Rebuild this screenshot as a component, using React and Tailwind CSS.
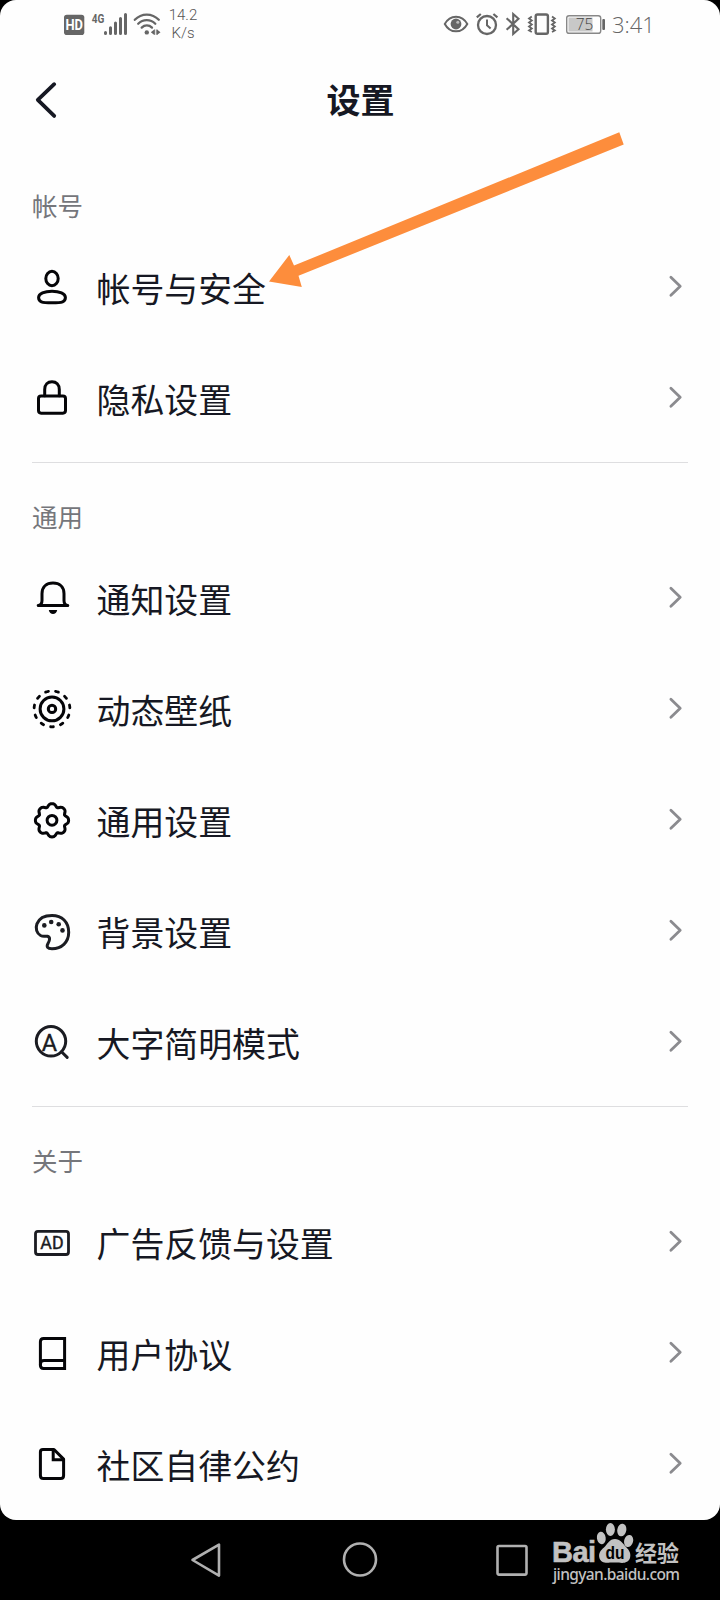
import React from "react";

const FONT = "font-['Roboto','Noto_Sans_CJK_SC',sans-serif]";

const gearPath =
  Array.from({ length: 96 }, (_, i) => {
    const a = (i / 96) * Math.PI * 2;
    const r = 15.4 + 1.5 * Math.cos(8 * a) - 0.3 * Math.cos(16 * a);
    return `${i ? "L" : "M"}${(r * Math.cos(a)).toFixed(2)} ${(1 + r * Math.sin(a)).toFixed(2)}`;
  }).join("") + "Z";

function Icon({ children, color = "#050508" }) {
  return (
    <svg
      className="h-12 w-12 shrink-0"
      viewBox="-24 -23.3 48 48"
      fill="none"
      stroke={color}
      strokeWidth="3"
      strokeLinecap="round"
      strokeLinejoin="round"
    >
      {children}
    </svg>
  );
}

const icons = {
  user: (
    <Icon>
      <ellipse cx="0" cy="-7.8" rx="6.2" ry="7.2" />
      <path d="M-13.4 11.2C-13.4 7.3-7.5 4.9 0 4.9S13.4 7.3 13.4 11.2C13.4 15.6 10.4 16.5 0 16.5S-13.4 15.6-13.4 11.2Z" />
    </Icon>
  ),
  lock: (
    <Icon>
      <rect x="-13.5" y="-1.3" width="27" height="17.2" rx="2.6" />
      <path d="M-7.3-1.6V-7.7C-7.3-12.7-4.3-15.5 0-15.5S7.3-12.7 7.3-7.7V-1.6" />
    </Icon>
  ),
  bell: (
    <Icon>
      <path d="M-13.8 8.2H15.8C13 7.8 12 6.1 12 3.1V-3.6C12-10.4 7.5-14.4 1-14.4S-10-10.4-10-3.6V3.1C-10 6.1-11 7.8-13.8 8.2Z" />
      <path d="M-3.2 12.8H5.2C4.8 15.6 3 16.8 1 16.8S-2.8 15.6-3.2 12.8Z" fill="#050508" stroke="none" />
    </Icon>
  ),
  live: (
    <Icon>
      <circle cx="0" cy="0.6" r="11.9" />
      <circle cx="0" cy="0.6" r="3.7" />
      <circle
        cx="0"
        cy="0.6"
        r="17.9"
        strokeWidth="2.8"
        pathLength="110"
        strokeDasharray="2.8 7.2"
        strokeDashoffset="1.4"
        transform="rotate(90 0 0.6)"
      />
    </Icon>
  ),
  gear: (
    <Icon>
      <path d={gearPath} />
      <circle cx="0" cy="1" r="4.9" />
    </Icon>
  ),
  palette: (
    <Icon color="#1b1c22">
      <path d="M0-14.9C10-14.9 16.7-8.2 16.7 2S9.5 18.4 0 18.4C-4.6 18.4-5.8 16.4-4 13.2C-2 9.6-1.6 6.8-4.6 6C-6.8 5.4-8.6 6.6-11.4 5.2C-19.2 1-17.2-14.9 0-14.9Z" />
      <g fill="#1b1c22" stroke="none">
        <circle cx="-7.7" cy="-4.9" r="2.3" />
        <circle cx="-.8" cy="-8.3" r="2.3" />
        <circle cx="6.7" cy="-6.1" r="2.3" />
        <circle cx="10.5" cy="0.1" r="2.3" />
      </g>
    </Icon>
  ),
  zoomA: (
    <Icon color="#1b1c22">
      <circle cx="-1" cy="0" r="14.7" />
      <path d="M9.5 10.5L15.2 16.1" />
      <text x="-2.6" y="10" fontSize="23.5" textAnchor="middle" fill="#1b1c22" stroke="#1b1c22" strokeWidth="0.4" fontFamily="Roboto">A</text>
    </Icon>
  ),
  ad: (
    <Icon color="#1b1c22">
      <rect x="-16.5" y="-10" width="33" height="23.2" rx="2.5" strokeWidth="2.8" />
      <text x="0" y="7.9" fontSize="17.8" textAnchor="middle" fill="#1b1c22" stroke="#1b1c22" strokeWidth="0.4" fontFamily="Roboto" textLength="23.5">AD</text>
    </Icon>
  ),
  book: (
    <Icon>
      <path d="M-8.4-13.8H12.6V16.2H-8.4C-10.4 16.2-11.6 15-11.6 13V-10.6C-11.6-12.6-10.4-13.8-8.4-13.8Z" strokeLinejoin="miter" />
      <path d="M-11.6 12C-11.6 9.2-10.5 8.2-8 8.2H12.6" />
    </Icon>
  ),
  file: (
    <Icon>
      <path d="M-9-13.8H2L11.6-4.2V12.2C11.6 14.2 10.6 15.2 8.6 15.2H-8.6C-10.6 15.2-11.6 14.2-11.6 12.2V-11.2C-11.6-13-10.6-13.8-9-13.8Z" />
      <path d="M1.2-13.4V-3.6H11.2" strokeLinejoin="miter" />
    </Icon>
  ),
};

function Row({ icon, label }) {
  return (
    <div className="flex h-[111px] items-center pr-9 pl-7">
      {icons[icon]}
      <span className="ml-[20.5px] flex-1 pt-[9px] text-[33.9px] leading-none text-[#161823]">{label}</span>
      <svg className="h-6 w-4" viewBox="0 0 16 24" fill="none" stroke="#8b8b8f" strokeWidth="2.8" strokeLinecap="round" strokeLinejoin="round">
        <path d="M2.9 2.3L12.2 11.3L2.9 20.3" />
      </svg>
    </div>
  );
}

function Section({ title, rows }) {
  return (
    <section className="flex flex-col">
      <h2 className="flex h-[79px] items-start px-8 pt-[43px] text-[25.5px] leading-[25px] text-[#75767b]">{title}</h2>
      {rows.map(([icon, label]) => (
        <Row key={label} icon={icon} label={label} />
      ))}
    </section>
  );
}

function StatusBar() {
  return (
    <div className="flex h-12 items-start pt-2 pl-[60px] text-[#666]">
      <svg className="h-8 w-[104px]" viewBox="60 8 104 32" fill="#666">
        <rect x="64" y="14.7" width="20.3" height="20.3" rx="2.8" />
        <text x="74.2" y="30" fontSize="14" fontWeight="700" fontFamily="Roboto" textAnchor="middle" textLength="17.5" lengthAdjust="spacingAndGlyphs" fill="#fff">HD</text>
        <text x="91.8" y="22.8" fontSize="13.2" fontWeight="700" fontFamily="Roboto" textLength="12.6" lengthAdjust="spacingAndGlyphs">4G</text>
        <g stroke="#666" strokeWidth="3" strokeLinecap="round">
          <path d="M105.5 32.5V33.5M110.5 27.8V33.5M115.5 23V33.5M120.5 18.5V33.5M125.5 14.5V33.5" />
        </g>
        <g fill="none" stroke="#666" strokeWidth="2.3" strokeLinecap="round">
          <path d="M134.8 19.8C141.5 12.8 152 12.8 158.8 19.8" />
          <path d="M138.2 23.7C143 19 150.5 19 155.3 23.7" />
          <path d="M141.7 27.6C144.7 24.7 149 24.7 152 27.6" />
        </g>
        <circle cx="146.8" cy="32.4" r="2.2" />
        <path d="M150.8 32.3L154.3 29.6V35ZM160.5 32.3L157 29.6V35Z" />
        <path d="M154.7 29.5V34.8M156.8 29.5V34.8" stroke="#666" strokeWidth="1" />
      </svg>
      <div className="-mt-px -ml-px mr-px flex w-10 flex-col items-center text-[15px] leading-[17.5px] font-light text-[#555]">
        <span>14.2</span>
        <span>K/s</span>
      </div>
      <svg className="ml-[236px] h-8 w-[168px]" viewBox="440 8 168 32" fill="none" stroke="#666" strokeWidth="2">
        <path d="M444.8 24C450 14.2 462 14.2 467.3 24C462 33.8 450 33.8 444.8 24Z" />
        <circle cx="456" cy="24" r="5.4" fill="#666" stroke="none" />
        <circle cx="457.8" cy="22.2" r="1.5" fill="#bbb" stroke="none" />
        <circle cx="487" cy="25" r="9" strokeWidth="2.3" />
        <path d="M476.8 17.4L480.8 14M497.4 17.4L493.4 14" strokeWidth="2.2" />
        <path d="M487 19.5V25.3L490.6 28.5" />
        <path d="M506.6 18.2L518.5 29.3L513.2 34V14L518.5 18.7L506.6 29.8" strokeWidth="2.1" />
        <rect x="535.7" y="14.5" width="12.2" height="19.3" rx="1.8" strokeWidth="2.4" />
        <path d="M531.8 16.5L529 18.5L531.8 20.5L529 22.5L531.8 24.5L529 26.5L531.8 28.5L529 30.5L531.8 32M552 16.5L554.8 18.5L552 20.5L554.8 22.5L552 24.5L554.8 26.5L552 28.5L554.8 30.5L552 32" strokeWidth="1.8" />
        <rect x="566.7" y="15.7" width="34" height="17.6" rx="2.4" strokeWidth="1.4" stroke="#888" />
        <rect x="568.5" y="17.5" width="24" height="14" fill="#c8c8c8" stroke="none" />
        <rect x="602.3" y="19" width="2.7" height="11" rx="1" fill="#666" stroke="none" />
        <text x="584.5" y="30" fontSize="15.5" fontWeight="300" textAnchor="middle" fontFamily="Open Sans" fill="#444" stroke="none">75</text>
      </svg>
      <span className="ml-1 font-['Open_Sans'] text-[22px] leading-[33px] font-light text-[#666]">3:41</span>
    </div>
  );
}

function NavBar() {
  return (
    <div className="relative flex h-20 items-center pt-0 pl-[188px]">
      <svg className="h-10 w-9" viewBox="0 0 36 40" fill="none" stroke="#b0b0b0" strokeWidth="2.6" strokeLinejoin="round">
        <path d="M4.5 20L31 4.7V35.6Z" />
      </svg>
      <svg className="ml-[116px] h-10 w-10" viewBox="0 0 40 40" fill="none" stroke="#b0b0b0" strokeWidth="2.6">
        <circle cx="20" cy="19.5" r="16" />
      </svg>
      <svg className="ml-28 h-10 w-10" viewBox="0 0 40 40" fill="none" stroke="#b0b0b0" strokeWidth="2.6">
        <rect x="5.5" y="6" width="29" height="28.6" rx="1.5" />
      </svg>
      <svg className="ml-4 h-[72px] w-[136px] self-start" viewBox="548 1520 136 72" fill="#c2c2c2">
        <text x="552" y="1562" fontSize="29" fontWeight="700" fontFamily="Liberation Sans" textLength="44" stroke="#c2c2c2" strokeWidth="0.6">Bai</text>
        <ellipse cx="601.3" cy="1538" rx="4.4" ry="6.2" transform="rotate(-8 601.3 1538)" />
        <ellipse cx="610.4" cy="1529.5" rx="4.5" ry="6.5" />
        <ellipse cx="621.8" cy="1530" rx="4.5" ry="6.4" transform="rotate(10 621.8 1530)" />
        <ellipse cx="628.6" cy="1541" rx="4.5" ry="6.2" transform="rotate(14 628.6 1541)" />
        <path d="M615 1539C620 1539 622.5 1543 626 1547C630 1551 631 1554 630 1558C628.5 1563 623 1563.3 619 1562.6H610C606 1563.3 600.5 1563 599.3 1557.5C598.5 1553 600.5 1550.5 604 1547.5C607.5 1544 609.5 1539 615 1539Z" />
        <text x="615" y="1559" fontSize="18" fontWeight="700" textAnchor="middle" fontFamily="Liberation Sans" textLength="19" lengthAdjust="spacingAndGlyphs" fill="#000">du</text>
        <text x="635" y="1560.5" fontSize="22" fontWeight="700" fontFamily="Noto Sans CJK SC">经验</text>
        <text x="553" y="1579.5" fontSize="15.5" fontWeight="500" fontFamily="Noto Sans" textLength="127">jingyan.baidu.com</text>
      </svg>
    </div>
  );
}

export default function App() {
  return (
    <div className={`relative h-[1600px] w-[720px] overflow-hidden bg-black ${FONT}`}>
      <main className="flex h-[1520px] flex-col overflow-hidden rounded-[16px] bg-[#fefefe]">
        <StatusBar />
        <header className="grid h-[104px] grid-cols-[1fr_auto_1fr] items-center">
          <svg className="ml-8 h-10 w-7" viewBox="0 0 28 40" fill="none" stroke="#161823" strokeWidth="3.8" strokeLinecap="round" strokeLinejoin="round">
            <path d="M22.2 4.2L5.8 19.9L22.2 35.9" />
          </svg>
          <h1 className="pt-[2px] pl-px text-[34px] leading-none font-bold text-[#161823]">设置</h1>
        </header>
        <Section title="帐号" rows={[["user", "帐号与安全"], ["lock", "隐私设置"]]} />
        <hr className="mx-8 mt-[9px] border-[#dedee0]" />
        <Section
          title="通用"
          rows={[
            ["bell", "通知设置"],
            ["live", "动态壁纸"],
            ["gear", "通用设置"],
            ["palette", "背景设置"],
            ["zoomA", "大字简明模式"],
          ]}
        />
        <hr className="mx-8 mt-[9px] border-[#dedee0]" />
        <Section title="关于" rows={[["ad", "广告反馈与设置"], ["book", "用户协议"], ["file", "社区自律公约"]]} />
      </main>
      <NavBar />
      <svg className="pointer-events-none absolute top-[125px] left-[260px] h-[170px] w-[370px]" viewBox="260 125 370 170">
        <path d="M269 281.5L289.3 255L294 265.6L619.3 132.3L623.7 144.6L298.5 275.8L301.8 287Z" fill="#fd8d3c" />
      </svg>
    </div>
  );
}
